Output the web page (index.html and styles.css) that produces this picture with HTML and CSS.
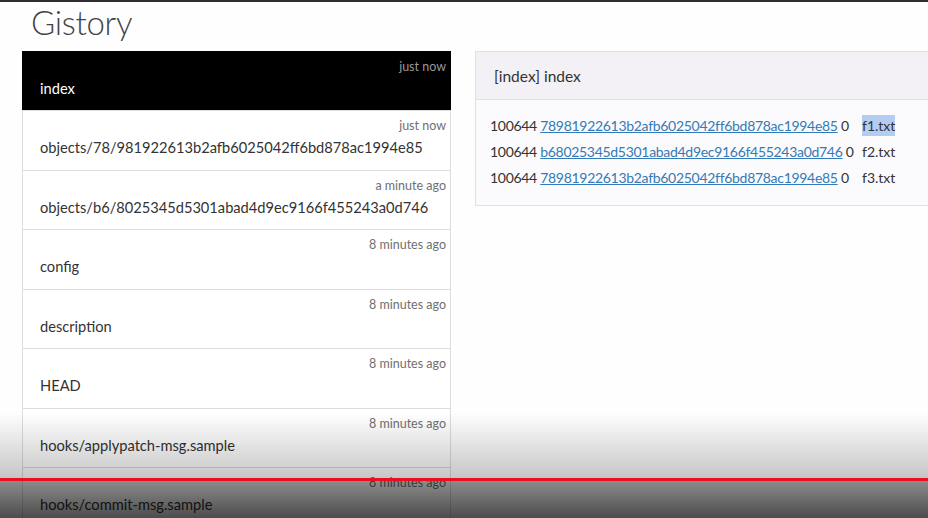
FILE: index.html
```html
<!DOCTYPE html>
<html lang="en">
<head>
  <meta charset="UTF-8">
  <meta name="viewport" content="width=device-width, initial-scale=1">
  <title>Gistory</title>
  <link rel="stylesheet" href="styles.css">
</head>
<body>
  <h1 class="title">Gistory</h1>
  <div class="layout">
    <!-- file list -->
    <div class="file-list">
      <div class="file active">
        <div class="time">just now</div>
        <div class="name">index</div>
      </div>
      <div class="file">
        <div class="time">just now</div>
        <div class="name">objects/78/981922613b2afb6025042ff6bd878ac1994e85</div>
      </div>
      <div class="file">
        <div class="time">a minute ago</div>
        <div class="name">objects/b6/8025345d5301abad4d9ec9166f455243a0d746</div>
      </div>
      <div class="file">
        <div class="time">8 minutes ago</div>
        <div class="name">config</div>
      </div>
      <div class="file">
        <div class="time">8 minutes ago</div>
        <div class="name">description</div>
      </div>
      <div class="file">
        <div class="time">8 minutes ago</div>
        <div class="name">HEAD</div>
      </div>
      <div class="file">
        <div class="time">8 minutes ago</div>
        <div class="name">hooks/applypatch-msg.sample</div>
      </div>
      <div class="file">
        <div class="time">8 minutes ago</div>
        <div class="name">hooks/commit-msg.sample</div>
      </div>
    </div>

    <!-- file content -->
    <div class="panel">
      <div class="panel-heading">[index] index</div>
      <div class="panel-body">
        <div class="entry">
          <span>100644 <a href="#">78981922613b2afb6025042ff6bd878ac1994e85</a> 0</span>
          <span><span class="selected">f1.txt</span></span>
        </div>
        <div class="entry">
          <span>100644 <a href="#">b68025345d5301abad4d9ec9166f455243a0d746</a> 0</span>
          <span>f2.txt</span>
        </div>
        <div class="entry">
          <span>100644 <a href="#">78981922613b2afb6025042ff6bd878ac1994e85</a> 0</span>
          <span>f3.txt</span>
        </div>
      </div>
    </div>
  </div>

  <!-- video player overlay -->
  <div class="player">
    <div class="fade"></div>
    <div class="progress"></div>
    <div class="controls"></div>
  </div>
</body>
</html>
```

FILE: styles.css
```css
* {
  box-sizing: border-box;
}

html, body {
  height: 100%;
}

body {
  font-family: Lato, 'Open Sans', sans-serif;
  color: #333;
  background: #fefefe;
  margin: 0;
  border-top: 2px solid #2e2e2e;
  overflow: hidden;
}

.title {
  font-weight: 300;
  font-size: 33px;
  line-height: 40px;
  letter-spacing: -0.3px;
  color: #444;
  margin: 0 0 9px 31px;
}

.layout {
  display: grid;
  grid-template-columns: 429px 480px;
  gap: 24px;
  padding-left: 22px;
}

.file-list {
  border-bottom: 1px solid #ddd;
}

.file {
  height: 59.43px;
  padding: 5px 4px 0 17px;
  background: #fff;
  border: 1px solid #ddd;
  border-bottom: none;
}

.file.active {
  background: #000;
  border-color: #000;
  color: #fff;
}

.time {
  text-align: right;
  font-size: 12.5px;
  line-height: 19px;
  color: #6f6f6f;
}

.file.active .time {
  color: #999;
}

.name {
  font-size: 14.65px;
  line-height: 26px;
}

.panel {
  border: 1px solid #e2e0e4;
  border-right: none;
  align-self: start;
}

.panel-heading {
  height: 48px;
  padding: 12px 18px;
  font-size: 15.5px;
  line-height: 24px;
  background: #f3f1f5;
  border-bottom: 1px solid #e2e0e4;
}

.panel-body {
  padding: 13px 14px 14px;
  background: #fbfafc;
  font-size: 14px;
  line-height: 26px;
}

.entry {
  display: grid;
  grid-template-columns: 372px auto;
  white-space: nowrap;
}

.entry > span:first-child {
  letter-spacing: -0.3px;
}

.entry a {
  color: #337ab7;
}

.selected {
  background: #b3cdf2;
  padding: 2px 0;
}

.player {
  position: fixed;
  left: 0;
  right: 0;
  bottom: 0;
  height: 105px;
  display: flex;
  flex-direction: column;
  pointer-events: none;
}

.fade {
  flex: 1;
  background: linear-gradient(to bottom, rgba(0, 0, 0, 0), rgba(0, 0, 0, 0.22));
}

.progress {
  height: 3px;
  background: #e51020;
}

.controls {
  height: 37px;
  background: linear-gradient(to bottom, rgba(0, 0, 0, 0.45), rgba(0, 0, 0, 0.7));
}
```
